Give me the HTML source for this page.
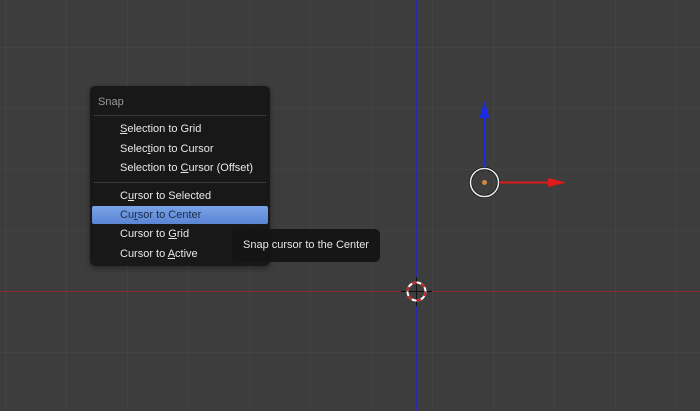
<!DOCTYPE html>
<html><head><style>
body{margin:0;width:700px;height:411px;overflow:hidden;background:#3d3d3d;position:relative;font-family:"Liberation Sans",sans-serif;}
.grid{position:absolute;inset:0;background-image:linear-gradient(to right,#434343 1px,transparent 1px),linear-gradient(to bottom,#434343 1px,transparent 1px);background-size:61px 61px;background-position:5px 47px;}
.menu{position:absolute;left:90px;top:86px;width:180px;height:180px;background:rgba(22,22,22,0.94);border-radius:5px;box-shadow:0 2px 6px rgba(0,0,0,.4);}
.title{position:absolute;left:8px;top:10px;font-size:11px;color:#9a9a9a;}
.sep{position:absolute;left:4px;right:4px;height:1px;background:#3a3a3a;}
.it{position:absolute;left:30px;font-size:11px;color:#e8e8e8;}
.hl{position:absolute;left:2px;width:176px;height:18px;top:120px;background:linear-gradient(#7aa2e6,#5a85d4);border-radius:2px;}
u{text-decoration:underline;}
.tip{position:absolute;left:232px;top:229px;width:148px;height:33px;background:rgba(20,20,20,0.95);border-radius:5px;color:#e6e6e6;font-size:11px;line-height:33px;text-align:center;}
</style></head><body>
<div class="grid"></div>
<svg width="700" height="411" style="position:absolute;left:0;top:0">
<line x1="416.5" y1="0" x2="416.5" y2="411" stroke="#2828b0" stroke-width="1"/>
<line x1="0" y1="291.5" x2="700" y2="291.5" stroke="#8a2a2a" stroke-width="1"/>
<line x1="484.5" y1="168" x2="484.5" y2="116" stroke="#1a2be6" stroke-width="2"/>
<polygon points="484.5,101 479.5,118 489.5,118" fill="#1a2be6"/>
<line x1="500" y1="182.5" x2="550" y2="182.5" stroke="#e01a1a" stroke-width="2"/>
<polygon points="566,182.5 548,178 548,187" fill="#e01a1a"/>
<circle cx="484.5" cy="182.5" r="14" fill="none" stroke="#111" stroke-width="3"/>
<circle cx="484.5" cy="182.5" r="14" fill="none" stroke="#e8e8e8" stroke-width="1.6"/>
<circle cx="484.5" cy="182.5" r="2.5" fill="#d08a40"/>
<line x1="401" y1="291.5" x2="432" y2="291.5" stroke="#111" stroke-width="1"/>
<line x1="416.5" y1="277" x2="416.5" y2="306" stroke="#111" stroke-width="1"/>
<circle cx="416.5" cy="291.5" r="9" fill="none" stroke="#fff" stroke-width="2"/>
<circle cx="416.5" cy="291.5" r="9" fill="none" stroke="#d02020" stroke-width="2" stroke-dasharray="4.7 4.7"/>
</svg>
<div class="menu">
<div class="title">Snap</div>
<div class="sep" style="top:29px"></div>
<div class="it" style="top:37px"><u>S</u>election to Grid</div>
<div class="it" style="top:57px">Selec<u>t</u>ion to Cursor</div>
<div class="it" style="top:76px">Selection to <u>C</u>ursor (Offset)</div>
<div class="sep" style="top:96px"></div>
<div class="it" style="top:104px">C<u>u</u>rsor to Selected</div>
<div class="hl"></div>
<div class="it" style="top:123px;color:#1a2a4a">Cu<u>r</u>sor to Center</div>
<div class="it" style="top:142px">Cursor to <u>G</u>rid</div>
<div class="it" style="top:162px">Cursor to <u>A</u>ctive</div>
</div>
<div class="tip">Snap cursor to the Center</div>
</body></html>
